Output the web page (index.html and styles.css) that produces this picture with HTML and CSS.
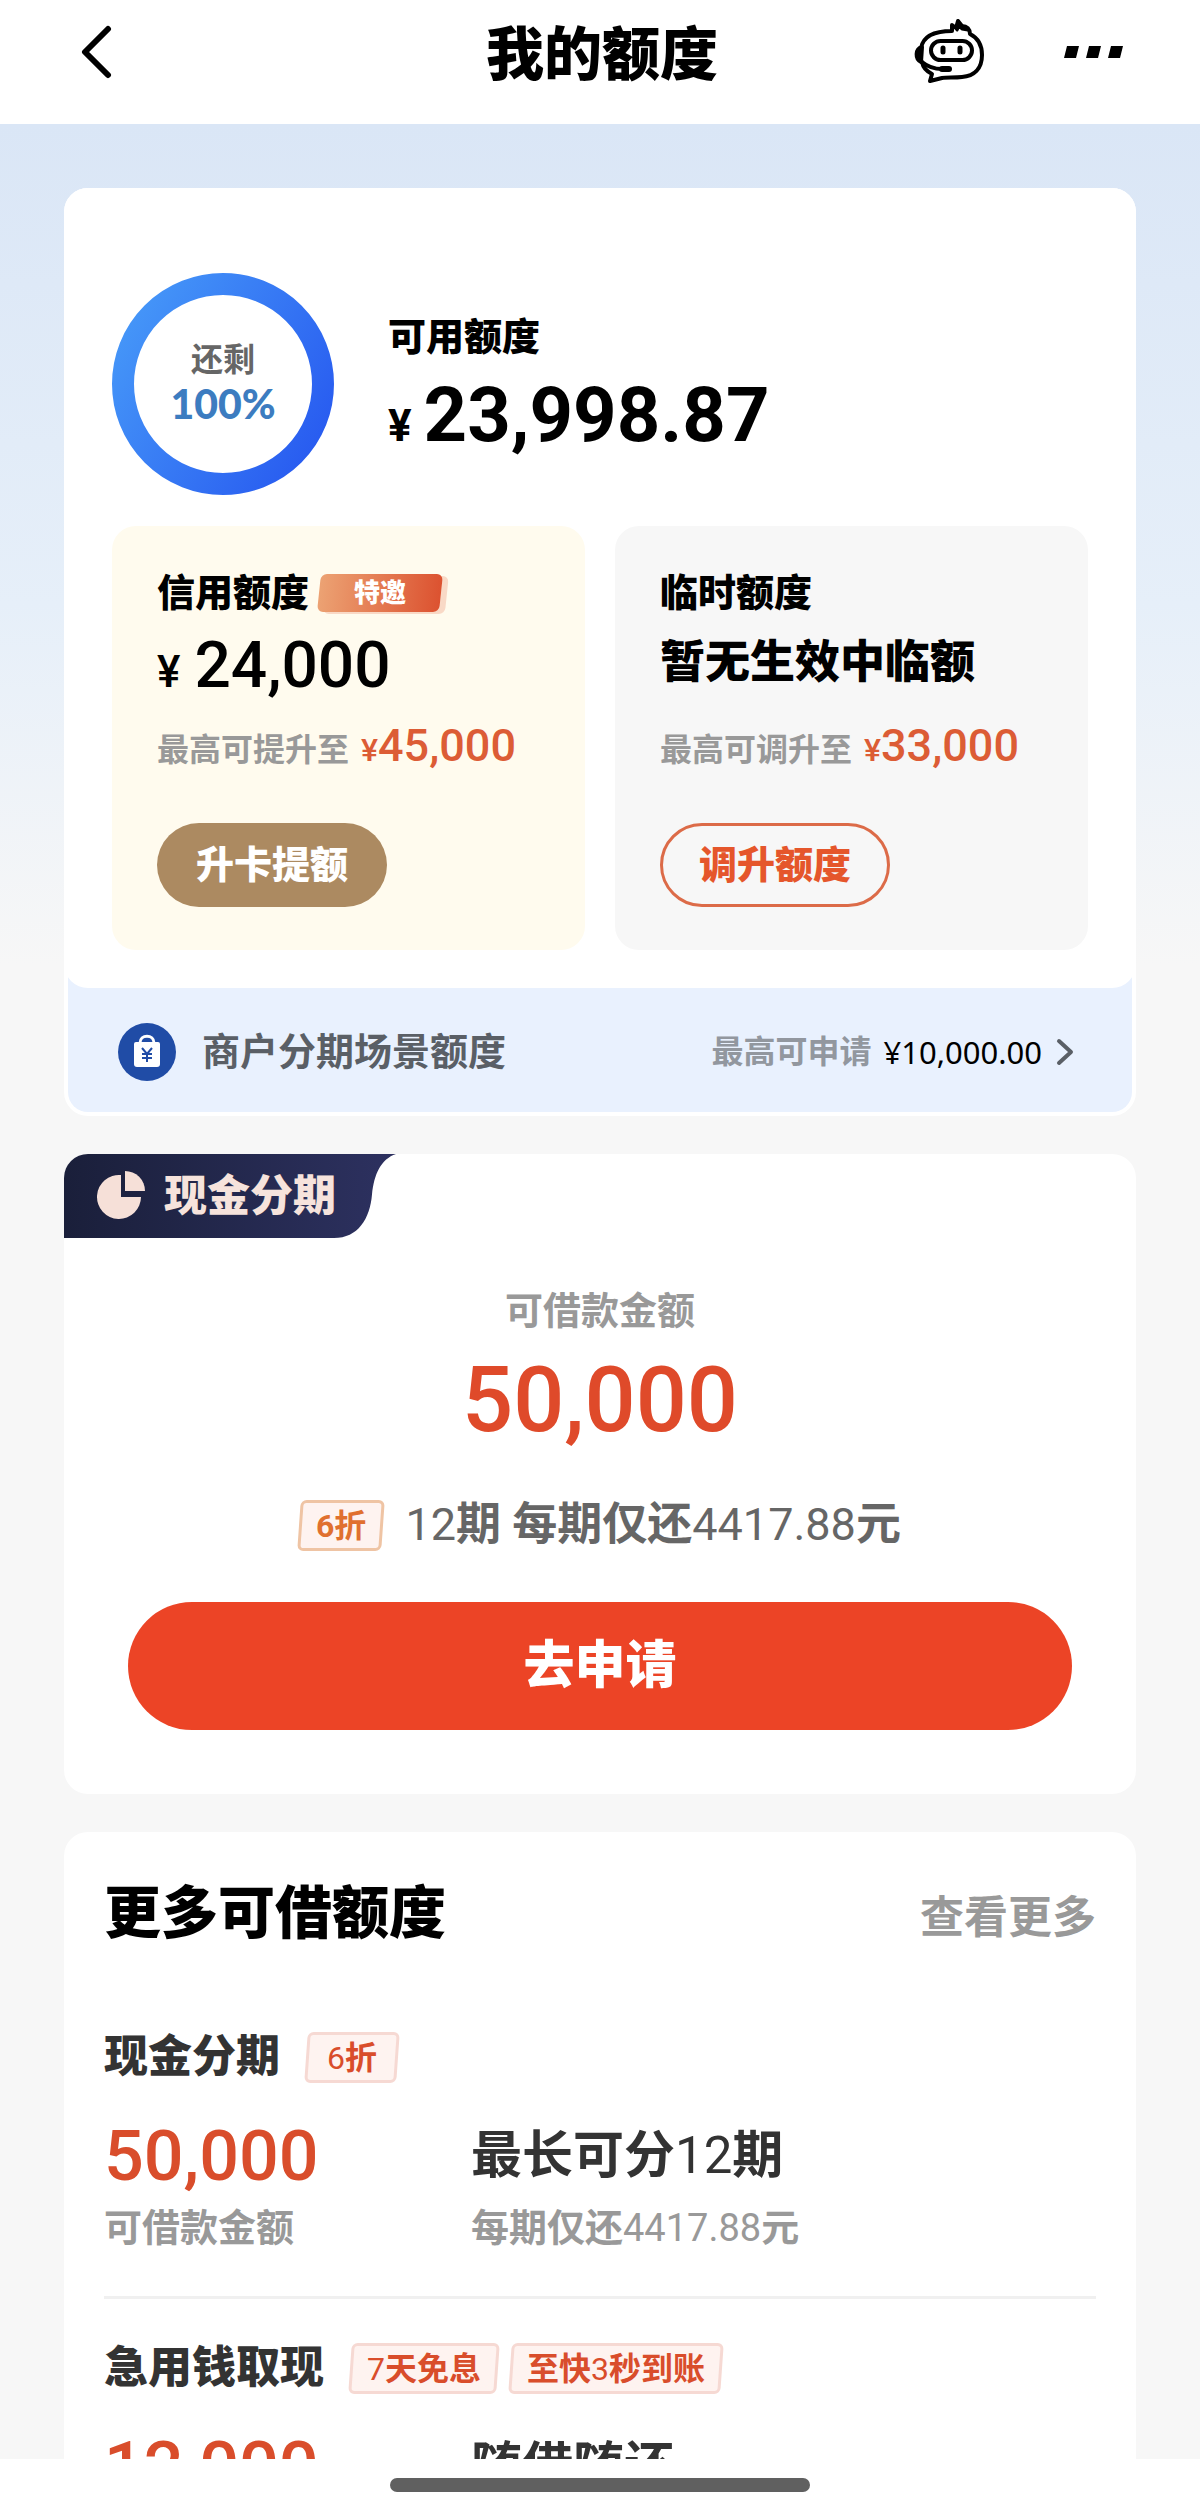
FILE: index.html
```html
<!DOCTYPE html>
<html lang="zh-CN">
<head>
<meta charset="utf-8">
<meta name="viewport" content="width=device-width, initial-scale=1">
<title>我的额度</title>
<link rel="stylesheet" href="styles.css">
</head>
<body>
<div class="app">
  <header class="topbar">
    <button class="icon-button" type="button" aria-label="返回">
      <svg width="32" height="54" viewBox="0 0 32 54" fill="none" stroke="#000" stroke-width="6" stroke-linecap="round" stroke-linejoin="round"><path d="M28 4 5 27l23 23"/></svg>
    </button>
    <h1 class="topbar-title">我的额度</h1>
    <div class="topbar-actions">
      <button class="icon-button" type="button" aria-label="客服">
        <svg width="72" height="68" viewBox="0 0 72 68" fill="none" stroke="#000" stroke-width="4" stroke-linecap="round" stroke-linejoin="round">
          <path d="M7 30C9 19 18 13 38 13V7l4 3 2-7 4 5c5 0 8 3 8 8 8 4 12 11 12 21 0 14-8 21-20 22-8 1-15 0-20 1-4 1-8 2-12 3l2-7c-6-3-9-7-10-12"/>
          <path d="M43 12l2-4 3 3 6 1" stroke-width="3"/>
          <rect x="17" y="23" width="41" height="19" rx="9.5"/>
          <path d="M29 30v4M46 30v4" stroke-width="5"/>
          <path d="M8 29C1 31 1 41 7 44z" fill="#000"/>
          <path d="M8 44c6 5 12 7 20 7"/>
          <path d="M28 51h7" stroke-width="6"/>
        </svg>
      </button>
      <button class="icon-button" type="button" aria-label="更多">
        <svg width="60" height="14" viewBox="0 0 60 14"><path d="M3 1h12l-3 12H0zM25 1h12l-3 12H22zM47 1h12l-3 12H44z"/></svg>
      </button>
    </div>
  </header>

  <main class="content">
    <section class="quota">
      <div class="quota-main">
        <div class="summary">
          <div class="ring">
            <svg class="ring-track" viewBox="0 0 222 222" aria-hidden="true">
              <defs><linearGradient id="ring" x1="0" y1="0.2" x2="1" y2="0.8"><stop offset="0" stop-color="#4596f8"/><stop offset="1" stop-color="#285bf0"/></linearGradient></defs>
              <circle cx="111" cy="111" r="100" fill="none" stroke="url(#ring)" stroke-width="22"/>
            </svg>
            <div class="ring-label"><span>还剩</span><strong>100%</strong></div>
          </div>
          <div class="available">
            <h2 class="label">可用额度</h2>
            <p class="available-value"><span class="yen">¥</span>23,998.87</p>
          </div>
        </div>
        <div class="tiles">
          <article class="tile tile-credit">
            <h3 class="label">信用额度<span class="invite"><span>特邀</span></span></h3>
            <p class="tile-value"><span class="yen">¥</span>24,000</p>
            <p class="tile-hint">最高可提升至<span class="tile-max"><small>¥</small>45,000</span></p>
            <button class="pill pill-gold" type="button">升卡提额</button>
          </article>
          <article class="tile tile-temp">
            <h3 class="label">临时额度</h3>
            <p class="tile-value tile-none">暂无生效中临额</p>
            <p class="tile-hint">最高可调升至<span class="tile-max"><small>¥</small>33,000</span></p>
            <button class="pill pill-outline" type="button">调升额度</button>
          </article>
        </div>
      </div>
      <a class="merchant" href="#merchant">
        <svg width="58" height="58" viewBox="0 0 58 58" aria-hidden="true">
          <circle cx="29" cy="29" r="29" fill="#204ca6"/>
          <path d="M18 19h22a2 2 0 0 1 2 2v20a3 3 0 0 1-3 3H19a3 3 0 0 1-3-3V21a2 2 0 0 1 2-2z" fill="#fff"/>
          <path d="M22 20c0-9 14-9 14 0" fill="none" stroke="#fff" stroke-width="3"/>
          <path d="M24 25l5 6 5-6M29 31v8M24 31h10M24 35h10" fill="none" stroke="#204ca6" stroke-width="2"/>
        </svg>
        <span class="merchant-name">商户分期场景额度</span>
        <span class="merchant-hint">最高可申请</span>
        <span class="merchant-value">¥10,000.00</span>
        <svg width="18" height="28" viewBox="0 0 18 28" fill="none" stroke="#5a5f66" stroke-width="4" stroke-linecap="round" stroke-linejoin="round" aria-hidden="true"><path d="M3 3l12 11L3 25"/></svg>
      </a>
    </section>

    <section class="cash">
      <h2 class="cash-tab">
        <svg class="cash-tab-shape" viewBox="0 0 332 83" preserveAspectRatio="none" aria-hidden="true">
          <defs><linearGradient id="tab"><stop offset="0" stop-color="#1a1f3a"/><stop offset="1" stop-color="#2d3160"/></linearGradient></defs>
          <path d="M0 0h332c-15 5-22 20-24 40-2 24-14 43-38 43H0z" fill="url(#tab)"/>
        </svg>
        <svg class="pie" width="50" height="50" viewBox="0 0 50 50" aria-hidden="true"><path d="M25 4v22h20A22 22 0 1 1 25 4z"/><path d="M29 0a20 20 0 0 1 20 20H29z"/></svg>
        <span>现金分期</span>
      </h2>
      <p class="cash-label">可借款金额</p>
      <p class="cash-value">50,000</p>
      <p class="cash-plan"><span class="tag tag-orange"><span>6折</span></span><span><span class="num">12</span>期 每期仅还<span class="num">4417.88</span>元</span></p>
      <button class="apply" type="button">去申请</button>
    </section>

    <section class="more">
      <div class="more-head">
        <h2 class="more-title">更多可借额度</h2>
        <a class="more-link" href="#all">查看更多</a>
      </div>
      <article class="loan">
        <div class="loan-head">
          <h3 class="loan-name">现金分期</h3>
          <span class="tag"><span><span class="num">6</span>折</span></span>
        </div>
        <div class="loan-grid">
          <p class="loan-value">50,000</p>
          <p class="loan-term">最长可分<span class="num">12</span>期</p>
          <p class="loan-note">可借款金额</p>
          <p class="loan-note">每期仅还<span class="num">4417.88</span>元</p>
        </div>
      </article>
      <article class="loan">
        <div class="loan-head">
          <h3 class="loan-name">急用钱取现</h3>
          <span class="tag"><span><span class="num">7</span>天免息</span></span>
          <span class="tag"><span>至快<span class="num">3</span>秒到账</span></span>
        </div>
        <div class="loan-grid">
          <p class="loan-value">12,000</p>
          <p class="loan-term">随借随还</p>
        </div>
      </article>
    </section>
  </main>

  <footer class="homebar"><span class="homebar-grip"></span></footer>
</div>
</body>
</html>
```
FILE: styles.css
```css
* {
  box-sizing: border-box;
}

body,
h1,
h2,
h3,
p {
  margin: 0;
}

body {
  font-family: Roboto, "Noto Sans CJK SC", sans-serif;
  font-weight: 400;
  color: #000;
  background: #fff;
}

button {
  font: inherit;
  color: inherit;
  border: 0;
  padding: 0;
  background: none;
  cursor: pointer;
}

a {
  color: inherit;
  text-decoration: none;
}

svg {
  display: block;
  flex: none;
}

/* Digits set lighter than the Chinese text around them */
.num {
  font-weight: 400;
}

.app {
  display: flex;
  flex-direction: column;
  height: 100vh;
}

/* Top bar */
.topbar {
  flex: none;
  display: grid;
  grid-template-columns: 1fr auto 1fr;
  align-items: center;
  padding: 8px 76px 28px 80px;
  height: 124px;
}

.icon-button {
  justify-self: start;
}

.topbar-title {
  padding-top: 6px;
  font-size: 58px;
  line-height: 80px;
  font-weight: 900;
}

.topbar-actions {
  display: flex;
  justify-content: flex-end;
  align-items: center;
  gap: 78px;
}

/* Scrolling content */
.content {
  flex: 1;
  min-height: 0;
  overflow-y: auto;
  scrollbar-width: none;
  padding: 64px 64px 0;
  background: linear-gradient(#dae6f6, #e6eff9 480px, #f7f7f7 840px);
}

.label {
  display: flex;
  align-items: center;
  gap: 10px;
  font-size: 38px;
  line-height: 56px;
  font-weight: 900;
}

.yen {
  font-size: 44px;
  line-height: 1;
}

/* Quota card */
.quota {
  border-radius: 24px;
  background: linear-gradient(#fff, #fff) top / 100% 760px no-repeat, #e9f1fe;
  border: solid #fff;
  border-width: 0 4px 4px;
  margin-bottom: 38px;
}

.quota-main {
  margin: 0 -4px;
  padding: 85px 48px 38px;
  background: #fff;
  border-radius: 24px;
}

.summary {
  display: flex;
  align-items: center;
  gap: 54px;
}

.ring {
  display: grid;
  place-items: center;
  width: 222px;
  height: 222px;
}

.ring-track,
.ring-label {
  grid-area: 1 / 1;
}

.ring-label {
  display: flex;
  flex-direction: column;
  align-items: center;
  padding-bottom: 4px;
  font-size: 32px;
  line-height: 44px;
  font-weight: 700;
  color: #666;
}

.ring-label strong {
  font-family: Lato, sans-serif;
  font-size: 41px;
  font-weight: 900;
  color: #3c7cc0;
}

.available {
  padding-top: 6px;
}

.available-value {
  font-size: 76px;
  line-height: 100px;
  font-weight: 700;
}

.available-value .yen {
  margin-right: 12px;
}

.tiles {
  display: grid;
  grid-template-columns: 1fr 1fr;
  gap: 30px;
  margin-top: 31px;
}

.tile {
  display: flex;
  flex-direction: column;
  align-items: flex-start;
  padding: 39px 45px 43px;
  border-radius: 24px;
}

.tile-credit {
  background: #fffbee;
}

.tile-temp {
  background: #f7f7f7;
}

.invite {
  display: grid;
  place-items: center;
  width: 122px;
  height: 38px;
  border-radius: 6px;
  transform: skewX(-6deg);
  background: linear-gradient(90deg, #eca273, #dc5230);
  box-shadow: 6px 2px 0 #f9d9c6;
  font-size: 26px;
  line-height: 38px;
  color: #fff;
}

.invite > span {
  transform: skewX(6deg);
}

.tile-value {
  margin-top: 5px;
  font-size: 64px;
  line-height: 80px;
  font-weight: 500;
}

.tile-value .yen {
  margin-right: 14px;
}

.tile-none {
  padding-bottom: 6px;
  font-size: 45px;
  line-height: 74px;
  font-weight: 900;
}

.tile-hint {
  margin-top: 14px;
  font-size: 32px;
  line-height: 60px;
  font-weight: 700;
  color: #999;
}

.tile-max {
  margin-left: 12px;
  font-size: 45px;
  line-height: 1;
  font-weight: 500;
  color: #dc5c35;
}

.tile-max small {
  font-size: 32px;
}

.pill {
  margin-top: 43px;
  width: 230px;
  height: 84px;
  border-radius: 42px;
  font-size: 38px;
  line-height: 56px;
  font-weight: 900;
}

.pill-gold {
  background: #ac8a61;
  color: #fff;
}

.pill-outline {
  border: 3px solid #dc6b48;
  color: #e5562b;
}

/* Merchant strip */
.merchant {
  display: flex;
  align-items: center;
  height: 124px;
  padding: 4px 58px 0 50px;
  border-radius: 0 0 20px 20px;
  line-height: 44px;
}

.merchant-name {
  margin: 0 auto 0 26px;
  font-size: 38px;
  font-weight: 700;
  color: #5a5f66;
}

.merchant-hint {
  font-size: 32px;
  font-weight: 700;
  color: #92979f;
}

.merchant-value {
  margin: 0 14px 0 12px;
  font-family: "Noto Sans", sans-serif;
  font-size: 31px;
}

/* Cash instalment card */
.cash {
  display: flex;
  flex-direction: column;
  align-items: center;
  padding-bottom: 64px;
  margin-bottom: 38px;
  border-radius: 24px;
  background: #fff;
  overflow: hidden;
}

.cash-tab {
  align-self: flex-start;
  display: grid;
  grid-template-columns: 50px auto;
  align-items: center;
  gap: 18px;
  width: 332px;
  height: 84px;
  padding-left: 32px;
  position: relative;
  font-size: 43px;
  line-height: 64px;
  font-weight: 900;
  color: #f6e3dc;
}

.cash-tab-shape {
  position: absolute;
  inset: 0;
  width: 100%;
  height: 100%;
}

.pie,
.cash-tab span {
  position: relative;
}

.pie {
  fill: #f6e0d8;
}

.cash-label {
  margin-top: 45px;
  font-size: 38px;
  line-height: 56px;
  font-weight: 700;
  color: #999;
}

.cash-value {
  margin-top: 8px;
  font-size: 90px;
  line-height: 108px;
  font-weight: 500;
  color: #df4a2a;
}

.cash-plan {
  display: flex;
  align-items: center;
  gap: 22px;
  margin-top: 38px;
  font-size: 45px;
  line-height: 64px;
  font-weight: 700;
  color: #666;
}

.apply {
  align-self: stretch;
  margin: 45px 64px 0;
  height: 128px;
  border-radius: 64px;
  background: #ec4426;
  color: #fff;
  font-size: 51px;
  line-height: 64px;
  font-weight: 900;
}

/* Slanted tags */
.tag {
  display: grid;
  place-items: center;
  height: 51px;
  min-width: 92px;
  padding: 0 14px;
  border: 3px solid #f6d9d3;
  border-radius: 6px;
  background: #fef3f0;
  transform: skewX(-4deg);
  font-size: 32px;
  line-height: 44px;
  font-weight: 700;
  color: #d94d2b;
}

.tag > span {
  transform: skewX(4deg);
}

.tag-orange {
  min-width: 84px;
  border-color: #efc4a4;
  color: #e0702f;
}

/* More loans */
.more {
  padding: 40px 40px 0;
  border-radius: 24px;
  background: #fff;
}

.more-head {
  display: flex;
  align-items: baseline;
  justify-content: space-between;
  margin-bottom: 28px;
  line-height: 84px;
}

.more-title {
  font-size: 57px;
  font-weight: 900;
}

.more-link {
  font-size: 44px;
  font-weight: 700;
  color: #999;
}

.loan {
  padding: 37px 0 40px;
  border-bottom: 3px solid #f0f0f0;
}

.loan-head {
  display: flex;
  align-items: center;
  gap: 12px;
}

.loan-name {
  margin-right: 14px;
  font-size: 44px;
  line-height: 64px;
  font-weight: 900;
  color: #333;
}

.loan-grid {
  display: grid;
  grid-template-columns: 367px 1fr;
  align-items: center;
  margin-top: 23px;
}

.loan-value {
  font-size: 70px;
  line-height: 88px;
  font-weight: 500;
  color: #d94d2b;
}

.loan-term {
  font-size: 51px;
  line-height: 88px;
  font-weight: 700;
  color: #333;
}

.loan-note {
  font-size: 38px;
  line-height: 56px;
  font-weight: 700;
  color: #999;
}

/* Home indicator */
.homebar {
  flex: none;
  display: grid;
  place-items: center;
  height: 52px;
  background: #fff;
}

.homebar-grip {
  width: 35%;
  height: 14px;
  border-radius: 7px;
  background: #606060;
}
```
